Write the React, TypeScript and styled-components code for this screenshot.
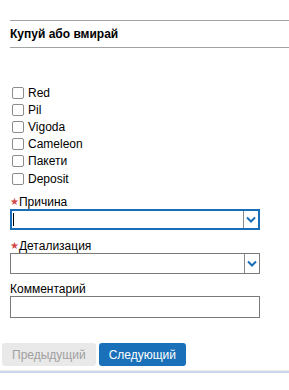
import React from "react";
import styled, { createGlobalStyle } from "styled-components";

const Global = createGlobalStyle`
  html, body { margin: 0; padding: 0; background: #fff; }
  body { font-family: "Liberation Sans", Arial, sans-serif; font-size: 12px; color: #000; }
`;

const Page = styled.div`
  width: 289px;
  height: 390px;
  padding-top: 20px;
  box-sizing: border-box;
  overflow: hidden;
`;

const Header = styled.div`
  margin-left: 10px;
  border-top: 1px solid #a3a3a3;
  border-bottom: 1px solid #a3a3a3;
  height: 26px;
  display: flex;
  align-items: center;
  font-weight: bold;
  font-size: 12px;
`;

const Checks = styled.div`
  margin-top: 36px;
  padding-left: 12px;
  display: flex;
  flex-direction: column;
`;

const CheckRow = styled.label`
  display: flex;
  align-items: center;
  height: 17.2px;
  gap: 4px;
`;

const Box = styled.input`
  appearance: none;
  margin: 0;
  width: 12px;
  height: 12px;
  box-sizing: border-box;
  border: 1px solid #8c8c8c;
  border-radius: 2px;
  background: #fff;
`;

const Field = styled.div<{ $top: number }>`
  margin-left: 10px;
  width: 250px;
  display: flex;
  flex-direction: column;
  margin-top: ${(p) => p.$top}px;
`;

const Label = styled.div`
  height: 14px;
  line-height: 14px;
  display: flex;
  align-items: center;
`;

const Star = styled.span`
  color: #d04848;
  font-family: "DejaVu Sans", sans-serif;
  font-size: 10px;
  line-height: 10px;
  flex-shrink: 0;
`;

const Select = styled.div<{ $focused?: boolean }>`
  height: 21px;
  box-sizing: border-box;
  border: ${(p) => (p.$focused ? "2px solid #1a6eb8" : "1px solid #7a7a7a")};
  display: flex;
  align-items: center;
  justify-content: space-between;
`;

const Caret = styled.span`
  width: 1px;
  height: 13px;
  background: #000;
  margin-left: 1px;
`;

const ArrowZone = styled.div`
  height: 100%;
  width: 15px;
  border-left: 1px solid #8a8a8a;
  display: flex;
  align-items: center;
  justify-content: center;
  box-sizing: border-box;
`;

const Input = styled.div`
  height: 22px;
  box-sizing: border-box;
  border: 1px solid #7a7a7a;
`;

const Buttons = styled.div`
  display: flex;
  gap: 3px;
  margin-left: 2px;
  margin-top: 25px;
`;

const Btn = styled.button<{ $primary?: boolean }>`
  height: 23px;
  padding: 0 10px;
  border: none;
  border-radius: 3px;
  font-family: "Liberation Sans", Arial, sans-serif;
  font-size: 12px;
  background: ${(p) => (p.$primary ? "#1a71b9" : "#e9e9e9")};
  color: ${(p) => (p.$primary ? "#fff" : "#a0a0a0")};
`;

const Footer = styled.div`
  margin-top: 4px;
  border-top: 1px solid #ececec;
  height: 3px;
  box-sizing: border-box;
  border-bottom: 2px solid #c9d8ea;
`;

const Chevron = () => (
  <svg width="10" height="7" viewBox="0 0 10 7">
    <path d="M1 1.5 L5 5.5 L9 1.5" fill="none" stroke="#1a6eb8" strokeWidth="2" />
  </svg>
);

const items = ["Red", "Pil", "Vigoda", "Cameleon", "Пакети", "Deposit"];

export default function App() {
  return (
    <Page>
      <Global />
      <Header>Купуй або вмирай</Header>
      <Checks>
        {items.map((t) => (
          <CheckRow key={t}>
            <Box type="checkbox" />
            <span>{t}</span>
          </CheckRow>
        ))}
      </Checks>
      <Field $top={8}>
        <Label>
          <Star>★</Star>Причина
        </Label>
        <Select $focused>
          <Caret />
          <ArrowZone>
            <Chevron />
          </ArrowZone>
        </Select>
      </Field>
      <Field $top={9}>
        <Label>
          <Star>★</Star>Детализация
        </Label>
        <Select>
          <span />
          <ArrowZone>
            <Chevron />
          </ArrowZone>
        </Select>
      </Field>
      <Field $top={8}>
        <Label>Комментарий</Label>
        <Input />
      </Field>
      <Buttons>
        <Btn>Предыдущий</Btn>
        <Btn $primary>Следующий</Btn>
      </Buttons>
      <Footer />
    </Page>
  );
}
